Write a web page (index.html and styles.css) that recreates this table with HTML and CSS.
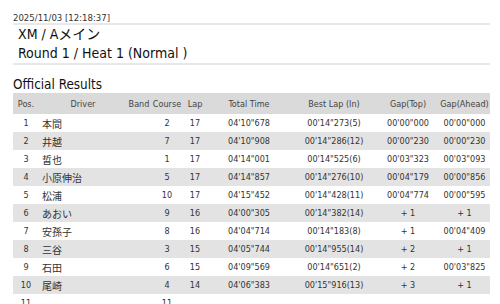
FILE: index.html
```html
<!DOCTYPE html>
<html lang="ja">
<head>
<meta charset="utf-8">
<title>Official Results</title>
<link rel="stylesheet" href="styles.css">
</head>
<body>
<div class="page">
  <div class="date">2025/11/03 [12:18:37]</div>
  <div class="titles">
    <div class="title">XM / Aメイン</div>
    <div class="title">Round 1 / Heat 1 (Normal )</div>
  </div>
  <h2 class="section">Official Results</h2>
  <table class="results">
    <colgroup>
      <col class="c-pos"><col class="c-driver"><col class="c-band"><col class="c-course"><col class="c-lap"><col class="c-total"><col class="c-best"><col class="c-gtop"><col class="c-gahead">
    </colgroup>
    <thead>
      <tr><th>Pos.</th><th>Driver</th><th>Band</th><th>Course</th><th>Lap</th><th>Total Time</th><th>Best Lap (In)</th><th>Gap(Top)</th><th>Gap(Ahead)</th></tr>
    </thead>
    <tbody>
      <tr><td>1</td><td class="name">本間</td><td></td><td>2</td><td>17</td><td>04'10"678</td><td>00'14"273(5)</td><td>00'00"000</td><td>00'00"000</td></tr>
      <tr><td>2</td><td class="name">井越</td><td></td><td>7</td><td>17</td><td>04'10"908</td><td>00'14"286(12)</td><td>00'00"230</td><td>00'00"230</td></tr>
      <tr><td>3</td><td class="name">晢也</td><td></td><td>1</td><td>17</td><td>04'14"001</td><td>00'14"525(6)</td><td>00'03"323</td><td>00'03"093</td></tr>
      <tr><td>4</td><td class="name">小原伸治</td><td></td><td>5</td><td>17</td><td>04'14"857</td><td>00'14"276(10)</td><td>00'04"179</td><td>00'00"856</td></tr>
      <tr><td>5</td><td class="name">松浦</td><td></td><td>10</td><td>17</td><td>04'15"452</td><td>00'14"428(11)</td><td>00'04"774</td><td>00'00"595</td></tr>
      <tr><td>6</td><td class="name">あおい</td><td></td><td>9</td><td>16</td><td>04'00"305</td><td>00'14"382(14)</td><td>+ 1</td><td>+ 1</td></tr>
      <tr><td>7</td><td class="name">安孫子</td><td></td><td>8</td><td>16</td><td>04'04"714</td><td>00'14"183(8)</td><td>+ 1</td><td>00'04"409</td></tr>
      <tr><td>8</td><td class="name">三谷</td><td></td><td>3</td><td>15</td><td>04'05"744</td><td>00'14"955(14)</td><td>+ 2</td><td>+ 1</td></tr>
      <tr><td>9</td><td class="name">石田</td><td></td><td>6</td><td>15</td><td>04'09"569</td><td>00'14"651(2)</td><td>+ 2</td><td>00'03"825</td></tr>
      <tr><td>10</td><td class="name">尾崎</td><td></td><td>4</td><td>14</td><td>04'06"383</td><td>00'15"916(13)</td><td>+ 3</td><td>+ 1</td></tr>
      <tr><td>11</td><td class="name"></td><td></td><td>11</td><td></td><td></td><td></td><td></td><td></td></tr>
    </tbody>
  </table>
</div>
</body>
</html>
```

FILE: styles.css
```css
html, body {
  margin: 0;
  padding: 0;
  background: #ffffff;
}

.page {
  width: 477px;
  margin-left: 13px;
  font-family: "DejaVu Sans Condensed", "DejaVu Sans", "Noto Sans CJK JP", sans-serif;
  color: #222;
}

.date {
  font-size: 9.5px;
  line-height: 11px;
  padding-top: 12px;
  color: #333;
  border-bottom: 2px solid #e8e8e8;
}

.titles {
  padding-left: 5px;
  border-bottom: 2px solid #e8e8e8;
}

.title {
  font-size: 14px;
  line-height: 19px;
  color: #111;
}

.section {
  margin: 12px 0 0 0;
  font-size: 13.4px;
  font-weight: normal;
  line-height: 16px;
  color: #111;
}

.results {
  width: 477px;
  table-layout: fixed;
  border-collapse: collapse;
  font-size: 9px;
  color: #333;
}

.c-pos { width: 26px; }
.c-driver { width: 88px; }
.c-band { width: 24px; }
.c-course { width: 32px; }
.c-lap { width: 24px; }
.c-total { width: 84px; }
.c-best { width: 86px; }
.c-gtop { width: 62px; }
.c-gahead { width: 51px; }

.results th {
  height: 21px;
  padding: 0;
  font-weight: normal;
  text-align: center;
  color: #444;
  background: #dadada;
  white-space: nowrap;
}

.results td {
  height: 18px;
  padding: 0;
  text-align: center;
  white-space: nowrap;
}

.results td.name {
  text-align: left;
  padding-left: 3px;
  font-family: "Noto Sans CJK JP", sans-serif;
  font-size: 10px;
}

.results tbody tr:nth-child(even) td {
  background: #e3e3e3;
}
```
